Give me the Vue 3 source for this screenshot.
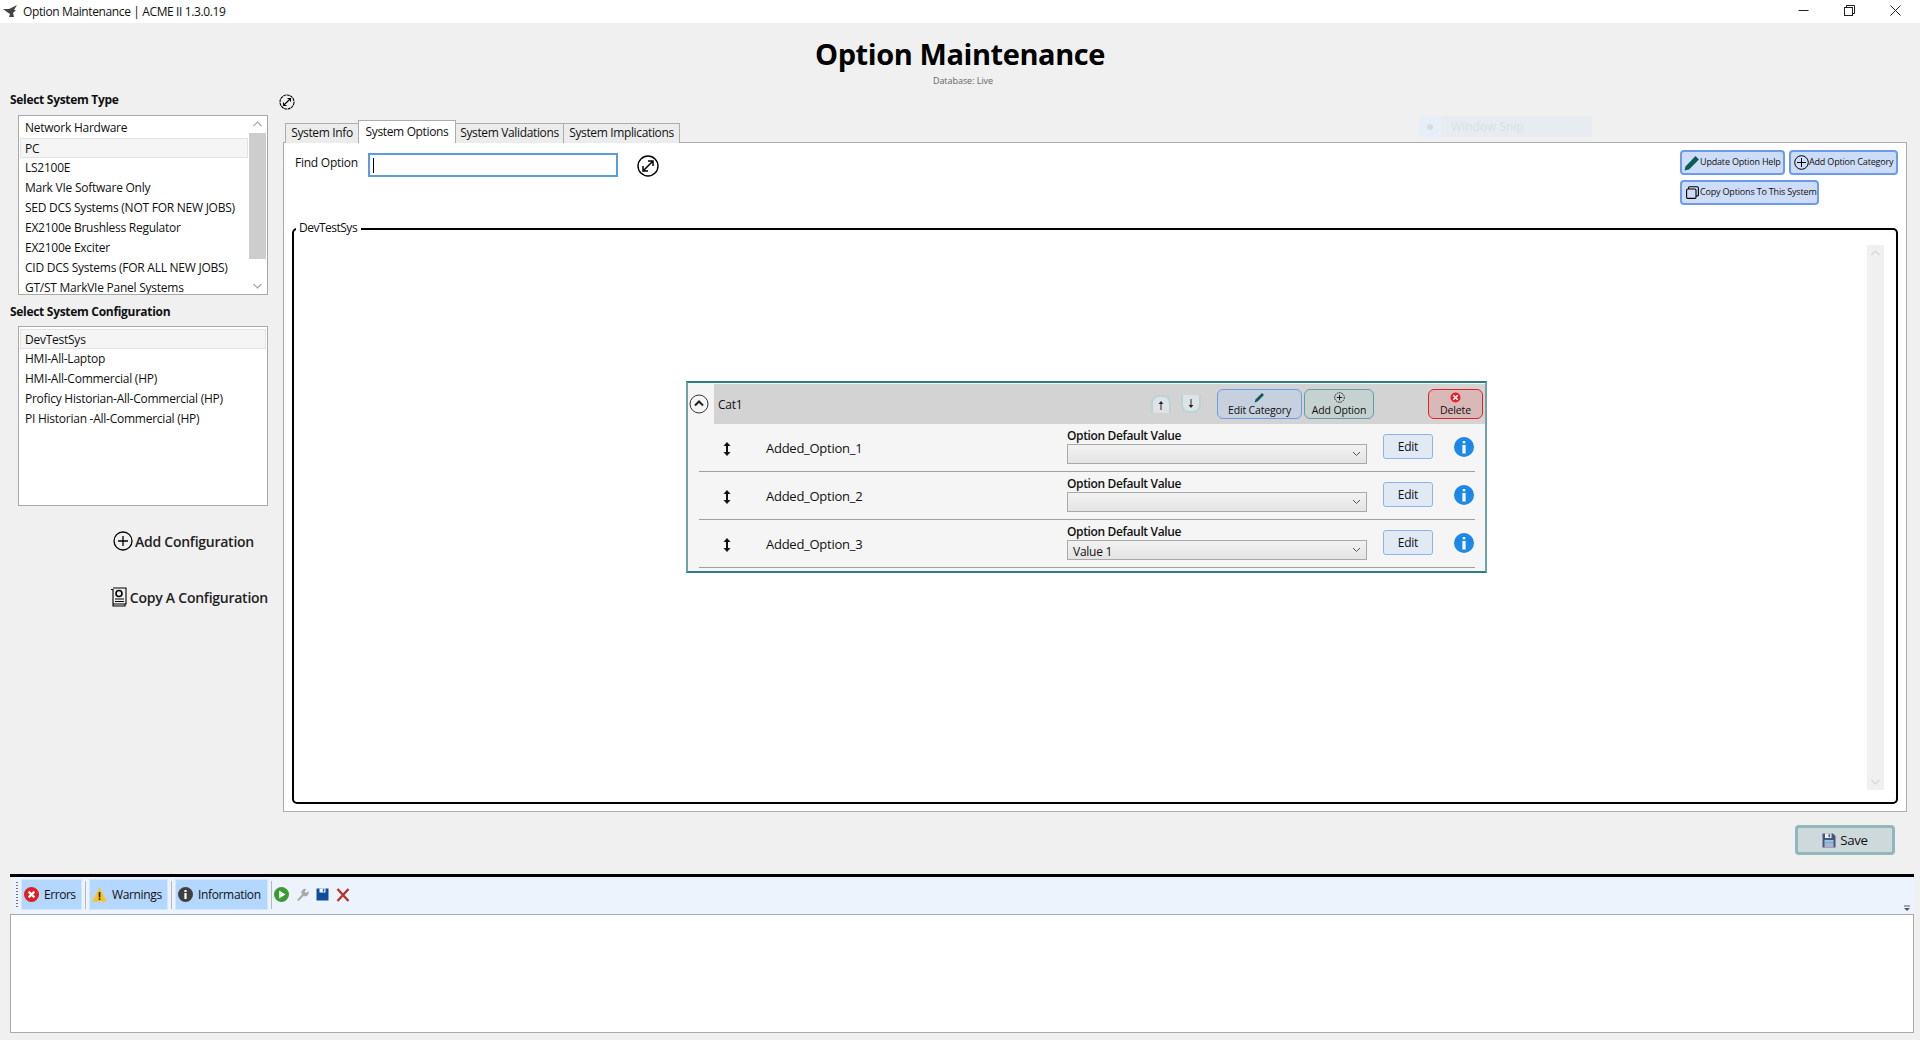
<script setup>
const systemTypes = [
  'Network Hardware',
  'PC',
  'LS2100E',
  'Mark VIe Software Only',
  'SED DCS Systems (NOT FOR NEW JOBS)',
  'EX2100e Brushless Regulator',
  'EX2100e Exciter',
  'CID DCS Systems (FOR ALL NEW JOBS)',
  'GT/ST MarkVIe Panel Systems'
]
const configurations = [
  'DevTestSys',
  'HMI-All-Laptop',
  'HMI-All-Commercial (HP)',
  'Proficy Historian-All-Commercial (HP)',
  'PI Historian -All-Commercial (HP)'
]
const tabs = [
  { label: 'System Info', width: 74 },
  { label: 'System Options', width: 98 },
  { label: 'System Validations', width: 109 },
  { label: 'System Implications', width: 117 }
]
const options = [
  { name: 'Added_Option_1', value: '' },
  { name: 'Added_Option_2', value: '' },
  { name: 'Added_Option_3', value: 'Value 1' }
]
</script>

<template>
  <div class="window">
    <!-- title bar -->
    <div class="titlebar">
      <svg class="app-icon" width="15" height="13" viewBox="0 0 15 13">
        <path d="M0 4 L6 4 L14 0 L11 5 L13 5 L10 8 L11 12 L6 12 L7 9 L4 7 Z" fill="#444" />
      </svg>
      <span class="title-text">Option Maintenance | ACME II 1.3.0.19</span>
      <div class="win-controls">
        <svg width="11" height="11" viewBox="0 0 11 11"><path d="M0.5 5.5 H10.5" stroke="#222" /></svg>
        <svg width="11" height="11" viewBox="0 0 11 11" fill="none" stroke="#222"><rect x="0.5" y="2.5" width="8" height="8" /><path d="M2.5 2.5 V0.5 H10.5 V8.5 H8.5" /></svg>
        <svg width="11" height="11" viewBox="0 0 11 11"><path d="M0.5 0.5 L10.5 10.5 M10.5 0.5 L0.5 10.5" stroke="#222" /></svg>
      </div>
    </div>

    <header class="page-head">
      <h1>Option Maintenance</h1>
      <div class="db-label">Database: Live</div>
    </header>

    <div class="ghost-snip">
      <span class="ghost-dot"><i></i></span>
      <span class="ghost-text">Window Snip</span>
    </div>

    <div class="main">
      <!-- left column -->
      <aside class="side">
        <div class="side-label">Select System Type</div>
        <div class="listbox type-list">
          <div class="list-items">
            <div v-for="t in systemTypes" :key="t" class="list-item" :class="{ selected: t === 'PC' }">{{ t }}</div>
          </div>
          <div class="list-scroll">
            <svg width="17" height="17" viewBox="0 0 17 17" fill="none" stroke="#a6a6a6" stroke-width="1.2"><path d="M4.5 10 L8.5 6 L12.5 10" /></svg>
            <div class="list-thumb"></div>
            <svg width="17" height="17" viewBox="0 0 17 17" fill="none" stroke="#a6a6a6" stroke-width="1.2"><path d="M4.5 7 L8.5 11 L12.5 7" /></svg>
          </div>
        </div>

        <div class="side-label second">Select System Configuration</div>
        <div class="listbox">
          <div class="list-items">
            <div v-for="c in configurations" :key="c" class="list-item" :class="{ selected: c === 'DevTestSys' }">{{ c }}</div>
          </div>
        </div>

        <div class="side-action add-config">
          <svg width="20" height="20" viewBox="0 0 20 20" fill="none" stroke="#000" stroke-width="1.3">
            <circle cx="10" cy="10" r="9" /><path d="M10 5 V15 M5 10 H15" />
          </svg>
          <span>Add Configuration</span>
        </div>
        <div class="side-action copy-config">
          <svg width="17" height="20" viewBox="0 0 17 20" fill="none" stroke="#000" stroke-width="1.1">
            <path d="M1 2.5 H3 V19 H15 V17 M3 1 H16 V17 H3" />
            <circle cx="9" cy="6.5" r="3" stroke-width="1.6" />
            <path d="M5 12 H14 M5 14.5 H14" />
          </svg>
          <span>Copy A Configuration</span>
        </div>
      </aside>

      <!-- right column -->
      <section class="content">
        <svg class="mini-expand" width="16" height="16" viewBox="0 0 16 16" fill="none" stroke="#000">
          <circle cx="8" cy="8" r="7" stroke-dasharray="3 0.6" stroke-width="1.1" />
          <path d="M4.5 11.5 L11.5 4.5 M8.5 4.5 H11.5 V7.5 M4.5 8.5 V11.5 H7.5" stroke-width="1.1" />
        </svg>

        <div class="tabs">
          <div
            v-for="t in tabs"
            :key="t.label"
            class="tab"
            :class="{ active: t.label === 'System Options' }"
            :style="{ width: t.width + 'px' }"
          >{{ t.label }}</div>
        </div>

        <div class="tab-panel">
          <div class="panel-top">
            <div class="find-row">
              <label class="find-label">Find Option</label>
              <div class="find-input"><span class="caret"></span></div>
              <svg class="find-icon" width="22" height="22" viewBox="0 0 22 22" fill="none" stroke="#000">
                <circle cx="11" cy="11" r="10" stroke-width="1.4" />
                <path d="M6 16 L16 6 M11 6 H16 V11 M6 11 V16 H11" stroke-width="1.5" />
              </svg>
            </div>
            <div class="top-buttons">
              <button class="blue-btn update-btn">
                <svg width="16" height="16" viewBox="0 0 16 16"><path d="M0.5 15.5 L1.5 11.5 L11.5 1 L15 4.5 L5 14.5 Z" fill="#0c5c5c" /></svg>
                <span>Update Option Help</span>
              </button>
              <button class="blue-btn add-btn">
                <svg width="15" height="15" viewBox="0 0 15 15" fill="none" stroke="#000"><circle cx="7.5" cy="7.5" r="6.8" /><path d="M7.5 3 V12 M3 7.5 H12" /></svg>
                <span>Add Option Category</span>
              </button>
              <button class="blue-btn copy-btn">
                <svg width="13" height="13" viewBox="0 0 13 13" fill="none" stroke="#000" stroke-width="1.1"><rect x="0.6" y="3" width="9.4" height="9.4" rx="1.2" /><path d="M2.5 3 V1.8 Q2.5 0.7 3.6 0.7 H11 Q12.4 0.7 12.4 2 V9 Q12.4 10 11 10 H10" /></svg>
                <span>Copy Options To This System</span>
              </button>
            </div>
          </div>

          <div class="option-frame">
            <div class="frame-legend">DevTestSys</div>
            <div class="frame-body">
              <div class="category">
                <div class="cat-head-row">
                  <svg class="cat-toggle" width="20" height="20" viewBox="0 0 20 20" fill="none">
                    <circle cx="10" cy="10" r="9" stroke="#333" stroke-width="1" />
                    <path d="M6 11.5 L10 7.5 L14 11.5" stroke="#222" stroke-width="2" />
                  </svg>
                  <div class="cat-head">
                    <span class="cat-name">Cat1</span>
                    <div class="cat-arrows">
                      <span class="move-btn up">
                        <svg width="6" height="9" viewBox="0 0 6 9"><path d="M3 9 V1" stroke="#223" stroke-width="1" /><path d="M3 0 L5.4 3 H0.6 Z" fill="#223" /></svg>
                      </span>
                      <span class="move-btn down">
                        <svg width="6" height="9" viewBox="0 0 6 9"><path d="M3 0 V8" stroke="#223" stroke-width="1" /><path d="M3 9 L5.4 6 H0.6 Z" fill="#223" /></svg>
                      </span>
                    </div>
                    <button class="cat-btn edit-cat">
                      <svg width="11" height="11" viewBox="0 0 11 11"><path d="M0.5 10.5 L1.5 7.5 L8 1 L10 3 L3.5 9.5 Z" fill="#0c5c5c" /></svg>
                      <span>Edit Category</span>
                    </button>
                    <button class="cat-btn add-opt">
                      <svg width="11" height="11" viewBox="0 0 11 11" fill="none" stroke="#111" stroke-width="0.9"><circle cx="5.5" cy="5.5" r="4.8" stroke-dasharray="1.6 0.8" /><path d="M5.5 2.8 V8.2 M2.8 5.5 H8.2" /></svg>
                      <span>Add Option</span>
                    </button>
                    <button class="cat-btn del-cat">
                      <svg width="11" height="11" viewBox="0 0 11 11"><circle cx="5.5" cy="5.5" r="5" fill="#e81c24" /><path d="M3.3 3.3 L7.7 7.7 M7.7 3.3 L3.3 7.7" stroke="#fff" stroke-width="1.6" /></svg>
                      <span>Delete</span>
                    </button>
                  </div>
                </div>

                <div v-for="o in options" :key="o.name" class="option-row">
                  <svg class="drag-icon" width="8" height="14" viewBox="0 0 8 14">
                    <path d="M4 2 V12" stroke="#111" stroke-width="2" />
                    <path d="M4 0 L7.5 4 H0.5 Z M4 14 L7.5 10 H0.5 Z" fill="#111" />
                  </svg>
                  <div class="option-name">{{ o.name }}</div>
                  <div class="option-value">
                    <div class="value-label">Option Default Value</div>
                    <div class="value-select">
                      <span>{{ o.value }}</span>
                      <svg width="9" height="6" viewBox="0 0 9 6" fill="none" stroke="#555"><path d="M1 1 L4.5 4.5 L8 1" /></svg>
                    </div>
                  </div>
                  <button class="edit-btn">Edit</button>
                  <svg class="info-icon" width="20" height="20" viewBox="0 0 20 20">
                    <circle cx="10" cy="10" r="10" fill="#1e88e5" />
                    <rect x="8.4" y="8" width="3.2" height="8.5" fill="#fff" />
                    <rect x="8.8" y="4" width="2.4" height="2.4" fill="#fff" />
                  </svg>
                </div>
              </div>
              <div class="frame-scroll">
                <svg width="17" height="17" viewBox="0 0 17 17" fill="none" stroke="#d6d6d6" stroke-width="1.2"><path d="M4.5 10 L8.5 6 L12.5 10" /></svg>
                <svg width="17" height="17" viewBox="0 0 17 17" fill="none" stroke="#d6d6d6" stroke-width="1.2"><path d="M4.5 7 L8.5 11 L12.5 7" /></svg>
              </div>
            </div>
          </div>
        </div>

        <div class="save-row">
          <button class="save-btn">
            <svg width="14" height="15" viewBox="0 0 14 15">
              <path d="M0.5 0.5 H11 L13.5 3 V14.5 H0.5 Z" fill="#4a5578" />
              <rect x="3" y="0.5" width="6.5" height="4.5" fill="#eef2f6" />
              <rect x="6.5" y="1.2" width="1.6" height="3" fill="#4a5578" />
              <rect x="2.5" y="7" width="9" height="2.5" fill="#7fd0ee" />
              <rect x="2.5" y="9.5" width="9" height="5" fill="#a9b4d0" />
            </svg>
            <span>Save</span>
          </button>
        </div>
      </section>
    </div>

    <!-- message log -->
    <div class="log">
      <div class="log-bar">
        <span class="grip"></span>
        <div class="log-tab errors">
          <svg width="15" height="15" viewBox="0 0 15 15"><circle cx="7.5" cy="7.5" r="7.5" fill="#e02020" /><path d="M4.6 4.6 L10.4 10.4 M10.4 4.6 L4.6 10.4" stroke="#fff" stroke-width="2.2" /></svg>
          <span>Errors</span>
        </div>
        <span class="sep"></span>
        <div class="log-tab warnings">
          <svg width="15" height="15" viewBox="0 0 15 15"><path d="M7.5 0.5 L14.8 14.5 H0.2 Z" fill="#fcc419" /><rect x="6.7" y="5" width="1.7" height="5.5" fill="#222" /><rect x="6.7" y="11.3" width="1.7" height="1.7" fill="#222" /></svg>
          <span>Warnings</span>
        </div>
        <span class="sep"></span>
        <div class="log-tab information">
          <svg width="15" height="15" viewBox="0 0 15 15"><circle cx="7.5" cy="7.5" r="7.5" fill="#404040" /><rect x="6.4" y="6" width="2.2" height="6" fill="#fff" /><rect x="6.4" y="3" width="2.2" height="2" fill="#fff" /></svg>
          <span>Information</span>
        </div>
        <span class="sep"></span>
        <div class="log-tools">
          <svg width="15" height="15" viewBox="0 0 15 15"><circle cx="7.5" cy="7.5" r="7.5" fill="#3a9a34" /><path d="M5.2 3.6 L11.4 7.5 L5.2 11.4 Z" fill="#fff" /></svg>
          <svg width="13" height="13" viewBox="0 0 13 13"><path d="M1 12 L6 6.5 A3.6 3.6 0 0 1 10.5 1.2 L8.6 3.6 L10 5 L12.2 3 A3.6 3.6 0 0 1 7.6 8 L2.6 13 Z" fill="#a9a9a9" /></svg>
          <svg width="13" height="13" viewBox="0 0 13 13"><path d="M0.5 0.5 H12.5 V12.5 H0.5 Z" fill="#0f4c9c" /><rect x="3.5" y="0.5" width="6" height="4" fill="#fff" /><rect x="6.8" y="1.2" width="1.5" height="2.4" fill="#0f4c9c" /></svg>
          <svg width="14" height="14" viewBox="0 0 14 14"><path d="M1.5 1 L12.5 13 M12.5 1 L1.5 13" stroke="#b5342a" stroke-width="2.4" /></svg>
        </div>
        <svg class="overflow" width="7" height="7" viewBox="0 0 7 7"><path d="M0 1 H6" stroke="#555" /><path d="M0 3 H6 L3 6 Z" fill="#555" /></svg>
      </div>
      <div class="log-box"></div>
    </div>
  </div>
</template>

<style>
html, body {
  margin: 0;
  background: #f0f0f0;
}
</style>

<style scoped>
.window {
  position: relative;
  width: 1920px;
  height: 1040px;
  background: #f0f0f0;
  overflow: hidden;
  font-family: "Open Sans", "Noto Sans", sans-serif;
  font-size: 12px;
  color: #111;
  letter-spacing: -0.25px;
}
button {
  font-family: inherit;
  letter-spacing: inherit;
  color: #111;
  padding: 0;
  box-sizing: border-box;
  cursor: pointer;
}

.titlebar {
  height: 23px;
  background: #fff;
  display: flex;
  align-items: center;
  padding-left: 3px;
  box-sizing: border-box;
}
.app-icon {
  margin-right: 5px;
}
.title-text {
  letter-spacing: -0.38px;
}
.win-controls {
  margin-left: auto;
  display: flex;
  gap: 35px;
  padding-right: 19px;
  margin-top: -3px;
}

.page-head {
  height: 67px;
  text-align: center;
}
.page-head h1 {
  margin: 0;
  padding-top: 11px;
  font-size: 29px;
  line-height: 39px;
  font-weight: 700;
  color: #000;
  letter-spacing: -0.42px;
}
.db-label {
  margin-top: 2px;
  font-size: 9px;
  line-height: 12px;
  color: #666;
  padding-left: 6px;
  letter-spacing: -0.05px;
}

.ghost-snip {
  position: absolute;
  left: 1419px;
  top: 116px;
  width: 173px;
  height: 21px;
  display: flex;
  background: #e8ecf0;
  color: #dcdfe2;
  font-size: 12px;
  line-height: 21px;
  letter-spacing: 0;
}
.ghost-dot {
  width: 22px;
  background: #e6eef8;
  display: flex;
  align-items: center;
  justify-content: center;
  margin-right: 10px;
}
.ghost-dot i {
  width: 6px;
  height: 6px;
  border-radius: 50%;
  background: #d8dcdf;
}

.main {
  display: flex;
  height: 784px;
}
.side {
  width: 283px;
  flex: none;
  padding: 2px 15px 0 10px;
  box-sizing: border-box;
}
.side-label {
  font-weight: 700;
  line-height: 16px;
  color: #111;
  margin-bottom: 7px;
  letter-spacing: -0.3px;
}
.side-label.second {
  margin-top: 9px;
  margin-bottom: 6px;
}
.listbox {
  margin-left: 8px;
  width: 250px;
  height: 180px;
  border: 1px solid #a9a9a9;
  background: #fff;
  box-sizing: border-box;
  display: flex;
  overflow: hidden;
}
.list-items {
  flex: 1;
  padding: 2px 1px 0 1px;
  min-width: 0;
}
.list-item {
  height: 20px;
  line-height: 20px;
  padding-left: 5px;
  box-sizing: border-box;
  white-space: nowrap;
}
.list-item.selected {
  background: #f5f5f5;
  border: 1px solid #e3e3e3;
  padding-left: 4px;
  line-height: 19px;
}
.list-scroll {
  width: 17px;
  flex: none;
  display: flex;
  flex-direction: column;
  background: #fff;
  margin-right: 1px;
}
.list-scroll svg {
  flex: none;
}
.list-thumb {
  flex: none;
  height: 126px;
  background: #cdcdcd;
}
.type-list .list-scroll svg:last-child {
  margin-top: auto;
}
.side-action {
  display: flex;
  align-items: center;
  justify-content: flex-end;
  font-size: 14px;
  font-weight: 600;
  color: #222;
  letter-spacing: -0.25px;
}
.add-config {
  margin-top: 25px;
  height: 20px;
  padding-right: 14px;
  gap: 2px;
}
.copy-config {
  margin-top: 36px;
  height: 20px;
  gap: 3px;
}

.content {
  flex: 1;
  min-width: 0;
  padding-right: 13px;
  box-sizing: border-box;
  display: flex;
  flex-direction: column;
}
.mini-expand {
  display: block;
  margin: 4px 0 10px -4px;
}
.tabs {
  display: flex;
  align-items: flex-end;
  height: 23px;
  padding-left: 2px;
  position: relative;
  z-index: 1;
  margin-bottom: -1px;
}
.tab {
  height: 20px;
  line-height: 17px;
  text-align: center;
  background: #ececec;
  border: 1px solid #adadad;
  border-bottom: none;
  margin-right: -1px;
  box-sizing: border-box;
  white-space: nowrap;
  letter-spacing: -0.36px;
}
.tab.active {
  height: 23px;
  background: #fff;
  line-height: 21px;
  position: relative;
  z-index: 1;
}
.tab-panel {
  height: 670px;
  background: #fff;
  border: 1px solid #adadad;
  box-sizing: border-box;
  display: flex;
  flex-direction: column;
}
.panel-top {
  height: 85px;
  flex: none;
  display: flex;
  justify-content: space-between;
  padding: 7px 8px 0 11px;
  box-sizing: border-box;
}
.find-row {
  display: flex;
  align-items: flex-start;
}
.find-label {
  width: 73px;
  line-height: 16px;
  margin-top: 5px;
}
.find-input {
  width: 250px;
  height: 24px;
  border: 2px solid #5b9bde;
  box-sizing: border-box;
  margin-top: 3px;
  display: flex;
  align-items: center;
  padding-left: 3px;
}
.caret {
  width: 1px;
  height: 15px;
  background: #000;
}
.find-icon {
  margin: 5px 0 0 19px;
}
.top-buttons {
  width: 218px;
  display: flex;
  flex-wrap: wrap;
  gap: 5px 4px;
  align-content: flex-start;
}
.blue-btn {
  height: 25px;
  background: #cddcf7;
  border: 2px solid #6e9aee;
  border-radius: 4px;
  display: flex;
  align-items: center;
  font-size: 9px;
  white-space: nowrap;
  letter-spacing: -0.18px;
}
.blue-btn span {
  padding-bottom: 2px;
}
.update-btn {
  width: 105px;
  padding-left: 2px;
}
.add-btn {
  width: 109px;
  padding-left: 3px;
}
.copy-btn {
  width: 139px;
  padding-left: 4px;
  gap: 1px;
}

.option-frame {
  position: relative;
  margin-left: 8px;
  width: 1606px;
  height: 576px;
  border: 2px solid #000;
  border-radius: 5px;
  box-sizing: border-box;
}
.frame-legend {
  position: absolute;
  left: 2px;
  top: -9px;
  background: #fff;
  padding: 0 4px 0 3px;
  line-height: 14px;
  letter-spacing: -0.5px;
}
.frame-body {
  display: flex;
  height: 100%;
  padding-top: 151px;
  box-sizing: border-box;
}
.category {
  margin-left: 392px;
  width: 801px;
  height: 192px;
  background: #f5f5f5;
  border: 2px solid #6fa3a6;
  border-top-color: #2f7c80;
  border-bottom-color: #2f7c80;
  box-sizing: border-box;
  flex: none;
  padding-top: 1px;
}
.cat-head-row {
  display: flex;
  align-items: center;
  height: 40px;
}
.cat-toggle {
  margin-left: 1px;
  flex: none;
}
.cat-head {
  margin-left: 5px;
  flex: 1;
  height: 40px;
  background: #d3d3d3;
  display: flex;
  align-items: center;
  padding-right: 1px;
}
.cat-name {
  margin-left: 4px;
  width: 433px;
}
.cat-arrows {
  width: 66px;
  display: flex;
  gap: 10px;
  flex: none;
}
.move-btn {
  width: 20px;
  height: 18px;
  box-sizing: border-box;
  background: #dfe3e3;
  border: 2px solid #b8d4d6;
  display: flex;
  align-items: center;
  justify-content: center;
}
.move-btn.up {
  border-bottom: none;
  border-radius: 8px 8px 0 0;
}
.move-btn.down {
  border-top: none;
  border-radius: 0 0 8px 8px;
}
.cat-btn {
  height: 30px;
  border-radius: 6px;
  display: flex;
  flex-direction: column;
  align-items: center;
  justify-content: center;
  font-size: 10.5px;
  line-height: 13px;
  letter-spacing: -0.15px;
  flex: none;
}
.cat-btn svg {
  display: block;
  margin-bottom: 1px;
}
.edit-cat {
  width: 85px;
  background: #c6d0de;
  border: 1px solid #6d9bea;
}
.add-opt {
  width: 70px;
  margin-left: 2px;
  background: #c6d2d0;
  border: 1px solid #5fa0a3;
}
.del-cat {
  width: 55px;
  margin-left: 54px;
  background: #d9b8b8;
  border: 1px solid #ee1c25;
}
.option-row {
  display: flex;
  align-items: flex-start;
  height: 48px;
  margin: 0 10px 0 11px;
  border-bottom: 1px solid #a0a0a0;
  box-sizing: border-box;
  position: relative;
}
.drag-icon {
  margin: 18px 0 0 24px;
  flex: none;
}
.option-name {
  width: 301px;
  margin: 16px 0 0 35px;
  line-height: 16px;
  font-size: 13px;
  letter-spacing: -0.26px;
}
.option-value {
  width: 300px;
  flex: none;
}
.value-label {
  font-weight: 600;
  line-height: 14px;
  margin-top: 5px;
  color: #111;
  letter-spacing: -0.36px;
}
.value-select {
  height: 20px;
  margin-top: 1px;
  border: 1px solid #a9a9a9;
  box-sizing: border-box;
  background: linear-gradient(#f2f2f2, #e4e4e4);
  display: flex;
  align-items: center;
  justify-content: space-between;
  padding: 0 5px 0 5px;
  line-height: 18px;
}
.value-select span {
  padding-top: 3px;
}
.edit-btn {
  width: 50px;
  height: 25px;
  margin: 10px 0 0 16px;
  background: #e1e9f5;
  border: 1px solid #8fb4ea;
  border-radius: 3px;
  font-size: 12px;
  flex: none;
}
.info-icon {
  margin: 13px 0 0 21px;
  flex: none;
}
.frame-scroll {
  width: 17px;
  margin-left: 380px;
  margin-top: -136px;
  height: 545px;
  display: flex;
  flex-direction: column;
  justify-content: space-between;
  background: #f0f0f0;
  flex: none;
}

.save-row {
  display: flex;
  justify-content: flex-end;
  padding: 13px 12px 0 0;
}
.save-btn {
  width: 100px;
  height: 30px;
  background: #ced9dc;
  border: 3px solid #8fb8bc;
  border-radius: 4px;
  display: flex;
  align-items: center;
  justify-content: center;
  gap: 4px;
  letter-spacing: -0.4px;
}

.log {
  margin-left: 10px;
  width: 1904px;
  border-top: 3px solid #000;
}
.log-bar {
  height: 37px;
  margin-left: 3px;
  padding-bottom: 2px;
  box-sizing: border-box;
  background: #edf3fc;
  display: flex;
  align-items: center;
  position: relative;
}
.grip {
  width: 2px;
  height: 26px;
  margin: 0 3px 0 3px;
  flex: none;
  background: repeating-linear-gradient(#777 0 1.5px, transparent 1.5px 3px);
}
.log-tab {
  height: 31px;
  background: #b3d7ff;
  border: 1px solid #d4e6fa;
  box-sizing: border-box;
  display: flex;
  align-items: center;
  padding-left: 2px;
  gap: 5px;
  letter-spacing: -0.35px;
  flex: none;
}
.log-tab.errors {
  width: 61px;
  letter-spacing: -0.45px;
}
.log-tab.warnings {
  width: 79px;
}
.log-tab.information {
  width: 93px;
}
.sep {
  width: 1px;
  height: 28px;
  background: #b4b8bc;
  margin: 0 3px;
  flex: none;
}
.log-tools {
  display: flex;
  align-items: center;
  gap: 7px;
  margin-left: -1px;
}
.overflow {
  position: absolute;
  right: 3px;
  bottom: 2px;
}
.log-box {
  height: 119px;
  background: #fff;
  border: 1px solid #a9a9a9;
  box-sizing: border-box;
}
</style>
